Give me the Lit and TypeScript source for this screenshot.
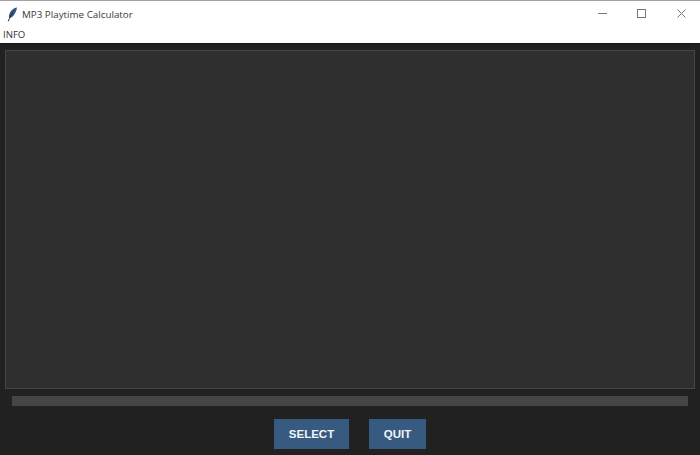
import { LitElement, html, css } from "lit";
import { customElement } from "lit/decorators.js";

@customElement("app-root")
export class AppRoot extends LitElement {
  static styles = css`
    :host { display: flex; flex-direction: column; width: 700px; height: 455px; overflow: hidden; background: #212121; font-family: "Open Sans", "Noto Sans", sans-serif; }
    .titlebar { display: flex; align-items: center; height: 26px; flex: none; background: #fff; border-top: 1px solid #a3a3a3; }
    .feather { margin-left: 7px; width: 11px; height: 15px; flex: none; }
    .title { margin-left: 4px; font-size: 9.8px; color: #3a3a3a; flex: 1; white-space: nowrap; }
    .wc { display: flex; flex: none; margin-right: -1px; padding-bottom: 2px; }
    .wc div { width: 39.5px; height: 24px; display: flex; align-items: center; justify-content: center; }
    .wc svg { display: block; }
    .menu { height: 15px; flex: none; background: #fff; display: flex; align-items: center; padding-left: 3px; padding-bottom: 1px; font-size: 9.6px; color: #333; }
    .main { flex: 1; display: flex; flex-direction: column; border-top: 1px solid #161616; padding: 6px 5px 0; min-height: 0; }
    .box { height: 339px; flex: none; box-sizing: border-box; background: #2f2f2f; border: 1px solid #464646; }
    .progress { height: 10px; flex: none; margin: 7px 7px 0; background: #454545; }
    .buttons { display: flex; justify-content: center; gap: 20px; margin-top: 13px; }
    button { all: unset; box-sizing: border-box; height: 30px; display: flex; align-items: center; justify-content: center; background: #365a80; color: #f2f4f6; font-family: "Liberation Sans", Arial, sans-serif; font-weight: 700; font-size: 11.5px; padding-bottom: 1px; }
    .select { width: 75px; }
    .quit { width: 57px; }
  `;

  render() {
    return html`
      <div class="titlebar">
        <svg class="feather" viewBox="0 0 11 15">
          <path d="M10 0.5C6.5 1 2.8 4 2 8.5 1.8 9.8 2 10.8 2.4 11.2 5.8 10.6 9 6.5 10 0.5Z" fill="#34557f"/>
          <path d="M5.5 5.5 2.4 11.5 1.2 14.4" fill="none" stroke="#26324a" stroke-width="1"/>
        </svg>
        <span class="title">MP3 Playtime Calculator</span>
        <div class="wc">
          <div><svg width="9" height="9" viewBox="0 0 9 9"><path d="M0 4.5H9" stroke="#777" stroke-width="1"/></svg></div>
          <div><svg width="9" height="9" viewBox="0 0 9 9"><rect x="0.5" y="0.5" width="8" height="8" fill="none" stroke="#777" stroke-width="1"/></svg></div>
          <div><svg width="9" height="9" viewBox="0 0 9 9"><path d="M0.5 0.5L8.5 8.5M8.5 0.5L0.5 8.5" stroke="#777" stroke-width="1"/></svg></div>
        </div>
      </div>
      <div class="menu">INFO</div>
      <div class="main">
        <div class="box"></div>
        <div class="progress"></div>
        <div class="buttons">
          <button class="select">SELECT</button>
          <button class="quit">QUIT</button>
        </div>
      </div>
    `;
  }
}
